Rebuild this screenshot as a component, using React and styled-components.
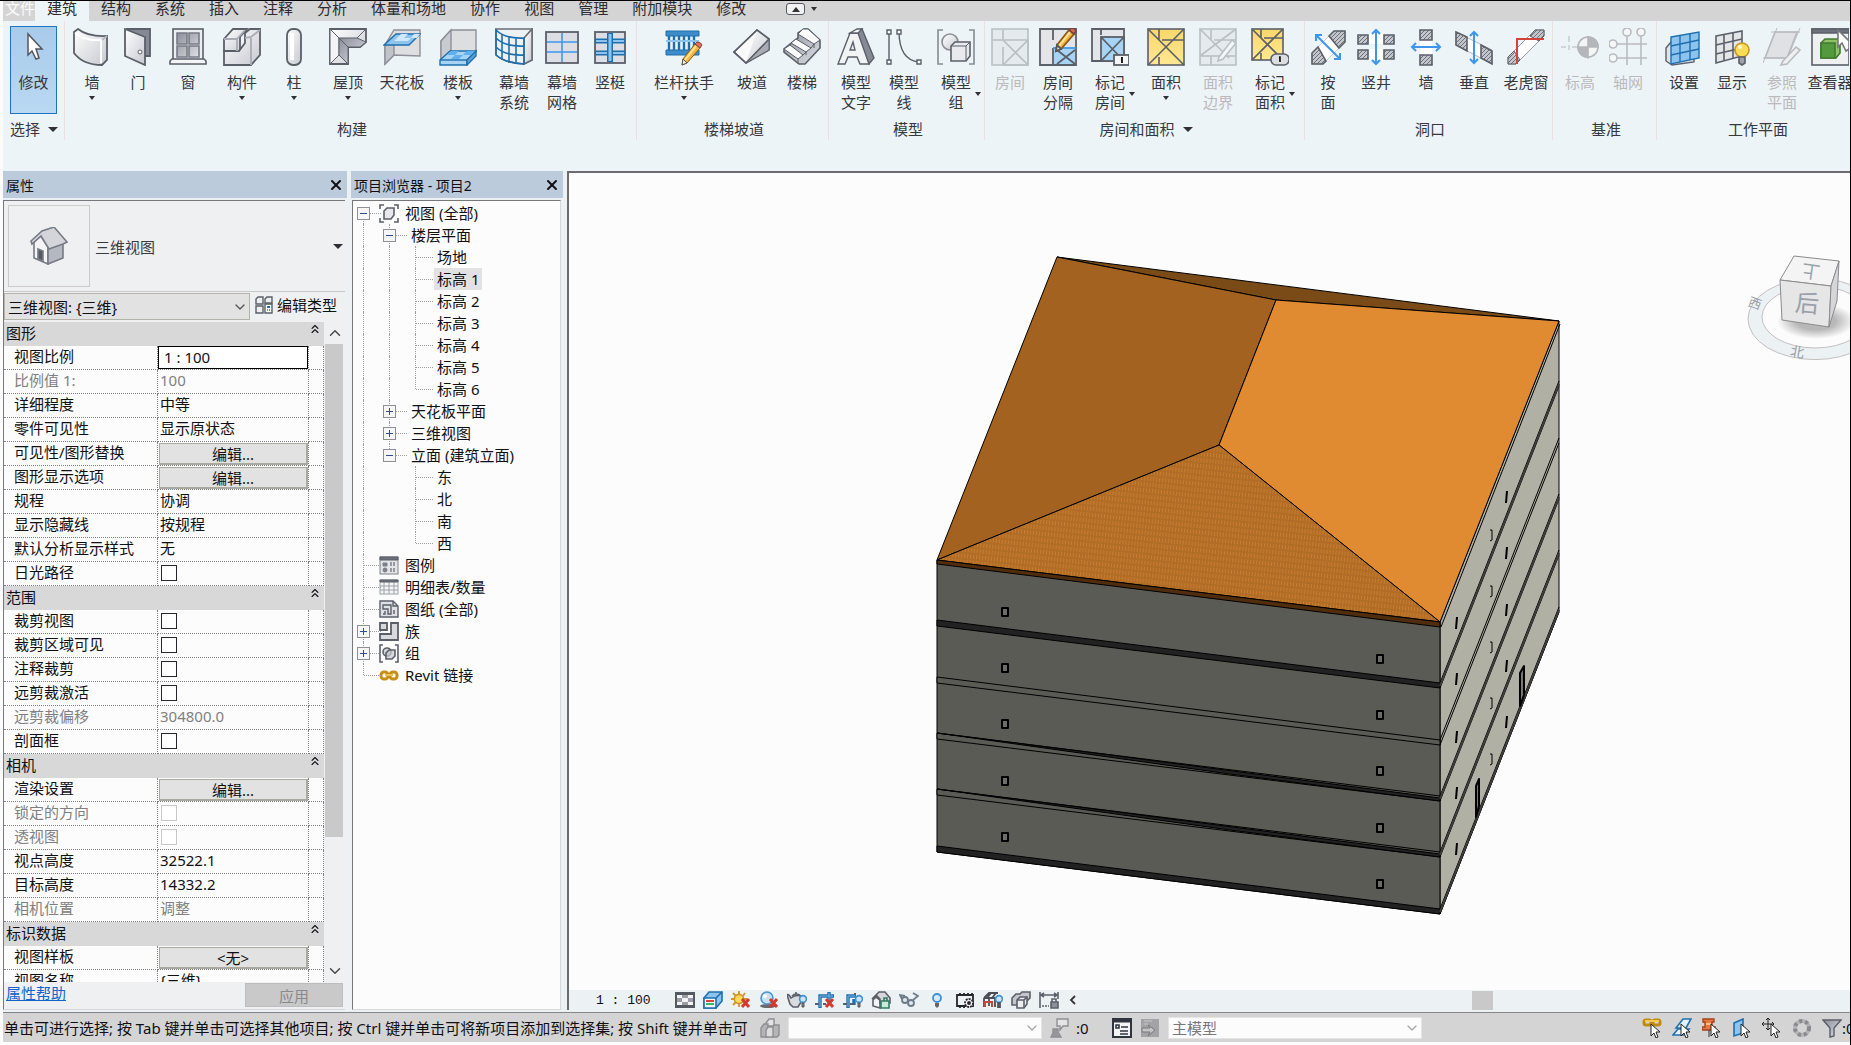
import React, { useState } from "react";
import styled, { createGlobalStyle, css } from "styled-components";
import { ChevronDown, ChevronUp, ChevronsUp, X } from "lucide-react";

const GlobalStyle = createGlobalStyle`
  * {
    box-sizing: border-box;
  }
  body {
    margin: 0;
    overflow: hidden;
    background: #fcfcfc;
  }
  body, button, input, select {
    font-family: "Noto Sans", "Noto Sans CJK SC", sans-serif;
    font-size: 15px;
    color: #101014;
  }
`;

const ink = "#5b5f69";
const blue = "#1f6fae";
const sky = "#8cc4ee";
const arrow = "#3c96f0";

/* shared gradients for the ribbon drawings */
function Gradients() {
  return (
    <Hidden aria-hidden="true">
      <defs>
        <linearGradient id="metal" x1="0" y1="0" x2="1" y2="1">
          <stop offset="0" stopColor="#ffffff" />
          <stop offset="1" stopColor="#c6c9d0" />
        </linearGradient>
        <linearGradient id="steel" x1="0" y1="0" x2="1" y2="1">
          <stop offset="0" stopColor="#8b8f99" />
          <stop offset="1" stopColor="#dfe1e6" />
        </linearGradient>
        <linearGradient id="gold" x1="0" y1="0" x2="0" y2="1">
          <stop offset="0" stopColor="#f9d869" />
          <stop offset="1" stopColor="#ffe892" />
        </linearGradient>
        <pattern id="hatch" width="4" height="4" patternUnits="userSpaceOnUse">
          <rect width="4" height="4" fill="#c3c6cc" />
          <path d="M0 4L4 0" stroke="#6c7079" strokeWidth="1" />
        </pattern>
        <pattern id="tiles" width="3" height="6" patternUnits="userSpaceOnUse" patternTransform="rotate(6)">
          <rect width="3" height="6" fill="#b16c25" />
          <rect width="1" height="4" fill="#c97e30" />
        </pattern>
        <radialGradient id="shade">
          <stop offset="0.5" stopColor="#b8b8b8" />
          <stop offset="1" stopColor="#fcfcfc" />
        </radialGradient>
      </defs>
    </Hidden>
  );
}

const pencil = (
  <g>
    <path d="M18 31L30 16L35 20L22 35L17 37Z" fill="#f4b63c" stroke="#8a5a1c" />
    <path d="M20 32L31 18" stroke="#ffe49a" strokeWidth="2" />
    <path d="M30 16L32 14Q36 14 37 17L35 20Z" fill="#e0705c" stroke="#7f4540" />
    <path d="M18 31L22 35L17 37Z" fill="#f6ead2" stroke="#555" />
  </g>
);

const icons = {
  modify: <path d="M13 6V27L17 23L21 31L24 30L21 21H27Z" fill="#fff" stroke="#55565c" strokeWidth="1.5" />,
  wall: (
    <g stroke={ink} strokeWidth="1.8" fill="url(#metal)">
      <path d="M1 4L5 1Q15 9 34 8V32L29 37Q10 37 1 25Z" />
      <path d="M2 5Q11 13 28 12V35" fill="none" stroke="#fff" />
      <path d="M29 12L34 8" stroke="#b7bac1" />
    </g>
  ),
  door: (
    <g stroke={ink} strokeWidth="1.8">
      <path d="M7 1H31V28H26" fill="#858994" />
      <path d="M6 1L26 9V37L6 28Z" fill="url(#metal)" />
      <circle cx="21" cy="24" r="2" fill="#fff" strokeWidth="1" />
    </g>
  ),
  window: (
    <g stroke={ink} strokeWidth="1.6">
      <rect x="4" y="1" width="30" height="31" fill="#eceef1" />
      <path d="M8 5H18V16H8ZM20 5H30V16H20ZM8 18H18V29H8ZM20 18H30V29H20Z" fill="url(#steel)" stroke="#777b85" />
      <path d="M3 31H35L37 33V36H1V33Z" fill="#f4f4f6" />
    </g>
  ),
  component: (
    <g stroke={ink} strokeWidth="1.8" fill="url(#metal)">
      <path d="M1 11L10 1H24L17 9V23H1Z" />
      <path d="M1 23H16L22 15V5L27 1H37V27L28 37H1Z" />
      <path d="M1 11H14V23M14 11L22 2M22 10L28 9L37 2M28 10V37" fill="none" stroke="#a9acb4" />
    </g>
  ),
  column: (
    <g stroke={ink} strokeWidth="1.8">
      <rect x="12" y="1" width="14" height="36" rx="6" fill="url(#metal)" />
      <path d="M17 5V32" stroke="#fff" strokeWidth="4" />
    </g>
  ),
  roof: (
    <g stroke={ink} strokeWidth="1.8">
      <path d="M1 1H37V14L31 19H19V36H1Z" fill="url(#metal)" />
      <path d="M1 1L10 10V27L1 36Z" fill="#f4f4f6" strokeWidth="1" />
      <path d="M10 10H28L37 14L31 19H19V36L10 27Z" fill="url(#steel)" strokeWidth="1" />
      <path d="M1 1L19 19M37 1L28 10" strokeWidth="1" />
    </g>
  ),
  ceiling: (
    <g strokeWidth="1.4">
      <path d="M11 2H37V28L11 27L2 36V17Z" fill="#dedfe1" stroke="#8d9098" />
      <path d="M2 17L11 12V27L2 36Z" fill="#c0c3c9" stroke="#8d9098" />
      <path d="M13 6H37L26 17H1Z" fill={sky} stroke={blue} />
      <path d="M18 6H25L21 10H14ZM11 13L14 10H21L18 13ZM21 10H28L25 13H18ZM28 10L31 6H37L34 10Z" fill="#cfe8fb" />
    </g>
  ),
  floor: (
    <g strokeWidth="1.4">
      <path d="M2 13L12 2H37V24H12L2 33Z" fill="#dcdee0" stroke="#8d9098" />
      <path d="M2 13L12 2V24L2 33Z" fill="#c8cbd0" stroke="#8d9098" />
      <path d="M1 32L11 23H37L28 32V37H1Z" fill="#a7d4f5" stroke={blue} />
      <path d="M37 23V28L28 37V32Z" fill="#5aa0d6" stroke={blue} />
      <path d="M12 23H20L16 27H8ZM16 27H24L20 31H12ZM28 23H36L32 27H24Z" fill="#5fb0f0" />
      <path d="M1 32H28" stroke={blue} />
    </g>
  ),
  curtainSystem: (
    <g strokeWidth="1.6">
      <path d="M1 1H37V32L29 36Q10 35 1 27Z" fill="#eef1f4" stroke="#686c76" />
      <path d="M29 10L37 1V32L29 36Z" fill="url(#metal)" stroke="#686c76" />
      <path
        d="M1 2Q10 11 29 10V36Q10 35 1 27ZM1 10Q10 19 29 18M1 19Q10 28 29 27M7 6V32M14 9V35M21 10V36"
        fill="none"
        stroke={blue}
      />
    </g>
  ),
  curtainGrid: (
    <g>
      <rect x="3" y="4" width="32" height="31" fill="#dcdee3" stroke={ink} strokeWidth="1.8" />
      <path d="M4 14H34M4 24H34M19 5V34" stroke={arrow} strokeWidth="1.6" />
    </g>
  ),
  mullion: (
    <g>
      <rect x="4" y="4" width="30" height="31" fill="#dcdee3" stroke={ink} strokeWidth="1.8" />
      <path d="M4 13H34M4 25H34" stroke={blue} strokeWidth="5" />
      <path d="M5 13H33M5 25H33" stroke={sky} strokeWidth="2" />
      <path d="M19 5V34" stroke={blue} strokeWidth="6" />
      <path d="M19 6V33" stroke={sky} strokeWidth="3" />
    </g>
  ),
  railing: (
    <g>
      <path d="M1 3H34V8H1ZM1 22H34V27H1Z" fill="#3d8bc8" stroke={blue} />
      <path d="M4 8V22M9 8V22M14 8V22M19 8V22M24 8V22M29 8V22" stroke={blue} strokeWidth="2.4" />
      <path d="M1 13H34" stroke={sky} strokeWidth="2" />
      {pencil}
    </g>
  ),
  ramp: (
    <g stroke={ink} strokeWidth="1.6">
      <path d="M1 24L24 2L36 11V22L13 35Z" fill="#fafafa" />
      <path d="M24 2L36 11V22L13 35Z" fill="url(#metal)" stroke="none" />
      <path d="M13 35L36 11V22Z" fill="#a8abb3" strokeWidth="1" />
      <path d="M1 24L24 2L36 11L13 35Z" fill="none" />
    </g>
  ),
  stairs: (
    <g stroke={ink} strokeWidth="1.6">
      <path d="M1 21L15 10V5L21 1H25L37 12V20L22 36H16L1 24Z" fill="url(#steel)" />
      <path d="M1 21L7 17L20 27L15 31ZM8 15L13 11L28 20L23 24ZM15 6L20 1H25L37 12L31 16Z" fill="#fafafa" strokeWidth="1" />
      <path d="M15 31V36M20 27L23 24V27M28 20L31 16V20" fill="none" strokeWidth="1" />
    </g>
  ),
  modelText: (
    <g stroke={ink} strokeWidth="1.4" fillRule="evenodd">
      <path d="M17 4L25 1L37 30L32 36Z" fill="#868a94" />
      <path d="M13 5H21L32 36H23L20 29H11L8 36H1ZM13 22H18L16 14Z" fill="#f2f3f5" />
      <path d="M13 5L20 1H25L21 5Z" fill="#fff" />
    </g>
  ),
  modelLine: (
    <g stroke={ink} strokeWidth="1.4" fill="none">
      <path d="M4 3V34M14 3Q14 32 34 34" />
      <path d="M2 2H6V6H2ZM2 32H6V36H2ZM12 2H16V6H12ZM32 32H36V36H32Z" fill="#fff" />
    </g>
  ),
  modelGroup: (
    <g stroke={ink} strokeWidth="1.6">
      <path d="M6 2H1V36H6M32 2H37V36H32" fill="none" stroke="#878a92" />
      <circle cx="13" cy="14" r="8" fill="url(#metal)" stroke="#8d9098" />
      <path d="M14 18L18 14H33V28L29 33H14Z" fill="#e9eaed" />
      <path d="M14 18H29V33M29 18L33 14" fill="none" strokeWidth="1" />
    </g>
  ),
  room: (
    <g stroke={ink} strokeWidth="1.6" opacity="0.35">
      <path d="M1 1H37V37H1Z" fill="#d8d8dc" />
      <path d="M1 12H12V1M12 19V37M12 12H37V37H12M12 12L37 37M37 12L12 37" fill="none" />
    </g>
  ),
  roomSeparator: (
    <g stroke={ink} strokeWidth="1.8">
      <path d="M1 1H37V37H1Z" fill="#e3e5e9" />
      <rect x="14" y="21" width="22" height="15" fill="#a7d4f5" stroke="none" />
      <path d="M14 1V12M14 20V37M18 36L36 22M18 22L36 36" fill="none" />
      <path d="M14 20H37" stroke={arrow} />
      <g transform="translate(0 -14)">{pencil}</g>
    </g>
  ),
  tagRoom: (
    <g stroke={ink} strokeWidth="1.8">
      <path d="M1 1H33V33H1Z" fill="#e3e5e9" />
      <rect x="10" y="9" width="23" height="24" fill="#a7d4f5" />
      <path d="M10 1V7M10 9L33 33M33 9L10 33" fill="none" />
      <rect x="23" y="27" width="15" height="10" fill="#f5f5f5" />
      <path d="M30 30L31 30V35" stroke="#111" />
    </g>
  ),
  area: (
    <g stroke={ink} strokeWidth="1.6">
      <rect x="1" y="1" width="36" height="36" fill="url(#gold)" />
      <path d="M1 1L37 37M37 1L1 37M12 1V12M15 12H37M12 29V37" fill="none" />
    </g>
  ),
  areaBoundary: (
    <g stroke={ink} strokeWidth="1.6" opacity="0.35">
      <path d="M1 1H37V37H1Z" fill="#d8d8dc" />
      <path d="M1 1L30 30M37 1L1 28M12 1V12M15 12H37M1 28H37M12 28V37" fill="none" />
      <path d="M20 29L33 12L37 15L24 31L19 33Z" fill="#fff" />
    </g>
  ),
  tagArea: (
    <g stroke={ink} strokeWidth="1.6">
      <rect x="1" y="1" width="31" height="31" fill="url(#gold)" />
      <path d="M1 1L32 32M32 1L1 32M10 1V10M13 10H32M10 25V32" fill="none" />
      <rect x="20" y="26" width="18" height="11" rx="5" fill="#dcdde0" />
      <path d="M28 29L29 29V34" stroke="#111" />
    </g>
  ),
  byFace: (
    <g>
      <path d="M3 36V25L25 3H36V14L14 36Z" fill="#fff" stroke="#c9ccd1" />
      <path d="M3 36V25L9 19L17 33L14 36ZM36 3V14L30 20L20 8L25 3Z" fill="url(#hatch)" stroke={ink} strokeWidth="1.6" />
      <path d="M8 8L30 30M7 13V7H13M25 31H31V25" stroke={arrow} strokeWidth="2" fill="none" />
    </g>
  ),
  shaft: (
    <g>
      <path d="M12 5H26V16H12ZM12 21H26V32H12Z" fill="#fff" />
      <path d="M1 7H11V16H1ZM27 7H37V16H27ZM1 22H11V31H1ZM27 22H37V31H27Z" fill="url(#hatch)" stroke={ink} strokeWidth="1.6" />
      <path d="M19 2V36M15 6L19 2L23 6M15 32L19 36L23 32" stroke={arrow} strokeWidth="2" fill="none" />
    </g>
  ),
  wallOpening: (
    <g>
      <path d="M13 12H25V27H13Z" fill="#fff" />
      <path d="M13 2H25V12H13ZM13 27H25V37H13Z" fill="url(#hatch)" stroke={ink} strokeWidth="1.6" />
      <path d="M5 19H33M9 15L5 19L9 23M29 15L33 19L29 23" stroke={arrow} strokeWidth="2" fill="none" />
    </g>
  ),
  vertical: (
    <g>
      <path d="M1 4L37 22V36L1 17Z" fill="#fff" stroke="#b7bac1" />
      <path d="M1 4L12 9V23L1 17ZM26 17L37 23V36L26 30Z" fill="url(#hatch)" stroke={ink} strokeWidth="1.6" />
      <path d="M19 4V35M15 8L19 4L23 8M15 31L19 35L23 31" stroke={arrow} strokeWidth="2" fill="none" />
    </g>
  ),
  dormer: (
    <g>
      <path d="M1 36V29L28 2H37V8L9 36Z" fill="#fff" stroke="#9a9da5" />
      <path d="M28 2H37V8L32 13L23 8ZM1 36V29L7 23L13 32L9 36Z" fill="url(#hatch)" stroke={ink} />
      <path d="M10 36V11H37" stroke="#d2413a" strokeWidth="2" fill="none" />
    </g>
  ),
  level: (
    <g stroke="#b4b6bb" strokeWidth="1.6">
      <path d="M0 19H5M8 17V22M8 8V14M11 19H38M27 8V31" fill="none" strokeWidth="1" />
      <circle cx="27" cy="19" r="10" fill="#f4f5f6" />
      <path d="M27 9A10 10 0 0 1 37 19H27ZM27 29A10 10 0 0 1 17 19H27Z" fill="#b4b6bb" />
    </g>
  ),
  grid: (
    <g stroke="#b9bbc0" strokeWidth="1.6" fill="#f4f6f7">
      <path d="M18 8V37M32 8V37M8 16H38M8 30H38" />
      <circle cx="18" cy="4" r="4" />
      <circle cx="32" cy="4" r="4" />
      <circle cx="4" cy="16" r="4" />
      <circle cx="4" cy="30" r="4" />
    </g>
  ),
  set: (
    <g strokeWidth="1.4">
      <path d="M1 20L6 14L29 12V34L7 37L1 33Z" fill="#dfe5ea" stroke={ink} />
      <path d="M6 9L34 4V30L6 36Z" fill={sky} stroke={blue} />
      <path d="M6 18L34 12M6 27L34 21M15 7V34M25 5V32" stroke={blue} />
    </g>
  ),
  show: (
    <g strokeWidth="1.6">
      <path d="M3 8L29 3V28L3 35Z" fill="#e3e5e9" stroke={ink} />
      <path d="M3 17L29 11M3 26L29 20M11 7V33M20 5V31" stroke={ink} />
      <circle cx="29" cy="22" r="7" fill="#fbdc58" stroke="#c79822" />
      <circle cx="27" cy="19" r="2" fill="#fff8d4" />
      <path d="M26 29H32V35L29 37L26 35Z" fill="#9ea2aa" stroke={ink} />
    </g>
  ),
  refPlane: (
    <g stroke="#b9bbc0" strokeWidth="1.6">
      <path d="M12 4H34L24 30H2Z" fill="#e0e1e4" />
      <path d="M8 4H37M14 0L0 35M37 0L22 36M0 30H28" fill="none" strokeWidth="1" />
      <path d="M20 33L33 19L37 22L24 36L18 37Z" fill="#f0f0f1" />
    </g>
  ),
  viewer: (
    <g stroke={ink} strokeWidth="1.6">
      <rect x="1" y="1" width="37" height="36" fill="#eef0f2" />
      <path d="M1 1H38V5H1Z" fill="#6d717b" />
      <path d="M10 15L14 11H29V25L25 30H10Z" fill="#8fc06a" stroke="#3f7a2e" />
      <path d="M10 15H24V30H10Z" fill="#55993f" stroke="#3f7a2e" />
      <path d="M27 2V19L31 15L35 23L38 21V13Z" fill="#fff" stroke="#777" />
    </g>
  ),
};

const ribbonPanels = [
  {
    title: "构建",
    tools: [
      { icon: "wall", label: "墙", w: 44, drop: true },
      { icon: "door", label: "门", w: 48 },
      { icon: "window", label: "窗", w: 52 },
      { icon: "component", label: "构件", w: 56, drop: true },
      { icon: "column", label: "柱", w: 48, drop: true },
      { icon: "roof", label: "屋顶", w: 60, drop: true },
      { icon: "ceiling", label: "天花板", w: 48 },
      { icon: "floor", label: "楼板", w: 64, drop: true },
      { icon: "curtainSystem", label: "幕墙\n系统", w: 48 },
      { icon: "curtainGrid", label: "幕墙\n网格", w: 48 },
      { icon: "mullion", label: "竖梃", w: 48 },
    ],
  },
  {
    title: "楼梯坡道",
    tools: [
      { icon: "railing", label: "栏杆扶手", w: 84, drop: true },
      { icon: "ramp", label: "坡道", w: 52 },
      { icon: "stairs", label: "楼梯", w: 48 },
    ],
  },
  {
    title: "模型",
    tools: [
      { icon: "modelText", label: "模型\n文字", w: 44 },
      { icon: "modelLine", label: "模型\n线", w: 52 },
      { icon: "modelGroup", label: "模型\n组", w: 52, side: true },
    ],
  },
  {
    title: "房间和面积",
    more: true,
    tools: [
      { icon: "room", label: "房间", w: 40, off: true },
      { icon: "roomSeparator", label: "房间\n分隔", w: 56 },
      { icon: "tagRoom", label: "标记\n房间", w: 48, side: true },
      { icon: "area", label: "面积", w: 64, drop: true },
      { icon: "areaBoundary", label: "面积\n边界", w: 40, off: true },
      { icon: "tagArea", label: "标记\n面积", w: 64, side: true },
    ],
  },
  {
    title: "洞口",
    tools: [
      { icon: "byFace", label: "按\n面", w: 36 },
      { icon: "shaft", label: "竖井", w: 60 },
      { icon: "wallOpening", label: "墙", w: 40 },
      { icon: "vertical", label: "垂直", w: 56 },
      { icon: "dormer", label: "老虎窗", w: 48 },
    ],
  },
  {
    title: "基准",
    tools: [
      { icon: "level", label: "标高", w: 44, off: true },
      { icon: "grid", label: "轴网", w: 52, off: true },
    ],
  },
  {
    title: "工作平面",
    tools: [
      { icon: "set", label: "设置", w: 44 },
      { icon: "show", label: "显示", w: 52 },
      { icon: "refPlane", label: "参照\n平面", w: 48, off: true },
      { icon: "viewer", label: "查看器", w: 48 },
    ],
  },
];

const tabs = ["建筑", "结构", "系统", "插入", "注释", "分析", "体量和场地", "协作", "视图", "管理", "附加模块", "修改"];

const properties = [
  {
    group: "图形",
    rows: [
      ["视图比例", "input", "1 : 100"],
      ["比例值 1:", "text", "100", true],
      ["详细程度", "text", "中等"],
      ["零件可见性", "text", "显示原状态"],
      ["可见性/图形替换", "button", "编辑..."],
      ["图形显示选项", "button", "编辑..."],
      ["规程", "text", "协调"],
      ["显示隐藏线", "text", "按规程"],
      ["默认分析显示样式", "text", "无"],
      ["日光路径", "check"],
    ],
  },
  {
    group: "范围",
    rows: [
      ["裁剪视图", "check"],
      ["裁剪区域可见", "check"],
      ["注释裁剪", "check"],
      ["远剪裁激活", "check"],
      ["远剪裁偏移", "text", "304800.0", true],
      ["剖面框", "check"],
    ],
  },
  {
    group: "相机",
    rows: [
      ["渲染设置", "button", "编辑..."],
      ["锁定的方向", "check", "", true],
      ["透视图", "check", "", true],
      ["视点高度", "text", "32522.1"],
      ["目标高度", "text", "14332.2"],
      ["相机位置", "text", "调整", true],
    ],
  },
  {
    group: "标识数据",
    rows: [
      ["视图样板", "button", "<无>"],
      ["视图名称", "text", "{三维}"],
    ],
  },
];

const treeIcons = {
  views: (
    <g fill="none" stroke={ink} strokeWidth="1.6">
      <path d="M1 5V1H5M15 1H19V5M19 14V18H15M5 18H1V14" />
      <path d="M5 7L8 4H15V11L12 15H5Z" fill="#e7e8eb" />
    </g>
  ),
  legend: (
    <g stroke="#7d808a">
      <rect x="1" y="1" width="18" height="17" fill="#e3e5e9" />
      <path d="M1 1H19V4H1Z" fill="#6d717b" stroke={ink} />
      <path d="M4 7H8V10H4Z" fill="#7d808a" />
      <circle cx="6" cy="14" r="2" fill="#7d808a" />
      <path d="M11 7H17M11 9H17M11 13H17M11 15H17" strokeWidth="1.4" strokeDasharray="2 1" />
    </g>
  ),
  schedule: (
    <g stroke="#9da0a8">
      <rect x="1" y="2" width="18" height="14" fill="#f4f5f6" />
      <path d="M1 8H19M1 12H19M5 4V16M10 4V16M15 4V16" />
      <path d="M1 2H19V4H1Z" fill="#6d717b" stroke={ink} />
    </g>
  ),
  sheet: (
    <g stroke={ink} strokeWidth="1.4" fill="none">
      <path d="M1 1H14L19 6V17H1Z" fill="#dfe1e5" />
      <path d="M4 5H12V14H9V9H4ZM4 14H6V11M14 1V6H19M15 10V14" />
    </g>
  ),
  family: (
    <g stroke={ink} strokeWidth="1.8" fill="#d8dadf">
      <path d="M1 1H8V8H1ZM12 1H19V18H1V12H12Z" />
    </g>
  ),
  group: (
    <g stroke={ink} strokeWidth="1.6" fill="none">
      <path d="M4 1H1V18H4M16 1H19V18H16" />
      <circle cx="8" cy="8" r="4" fill="#d5d7dc" />
      <path d="M7 9L10 6H16V12L13 15H7Z" fill="#c7c9cf" fillOpacity="0.7" />
    </g>
  ),
  link: (
    <g fill="none" stroke="#c78e16" strokeWidth="3">
      <rect x="2" y="6" width="7" height="7" rx="3" />
      <rect x="11" y="6" width="7" height="7" rx="3" />
      <path d="M6 9H14" stroke="#f0c04a" strokeWidth="2" />
    </g>
  ),
};

/* guides: l = vertical line, t = branch, e = last branch, n = nothing,
   f/b/z = toggle that opens, sits inside, or closes its branch */
const tree = [
  { guides: "f", icon: "views", name: "视图 (全部)", open: true },
  { guides: "lb", name: "楼层平面", open: true },
  { guides: "llt", name: "场地" },
  { guides: "llt", name: "标高 1" },
  { guides: "llt", name: "标高 2" },
  { guides: "llt", name: "标高 3" },
  { guides: "llt", name: "标高 4" },
  { guides: "llt", name: "标高 5" },
  { guides: "lle", name: "标高 6" },
  { guides: "lb", name: "天花板平面" },
  { guides: "lb", name: "三维视图" },
  { guides: "lz", name: "立面 (建筑立面)", open: true },
  { guides: "lnt", name: "东" },
  { guides: "lnt", name: "北" },
  { guides: "lnt", name: "南" },
  { guides: "lne", name: "西" },
  { guides: "t", icon: "legend", name: "图例" },
  { guides: "t", icon: "schedule", name: "明细表/数量" },
  { guides: "t", icon: "sheet", name: "图纸 (全部)" },
  { guides: "b", icon: "family", name: "族" },
  { guides: "b", icon: "group", name: "组" },
  { guides: "e", icon: "link", name: "Revit 链接" },
];

const redX = <path d="M11 8L18 16M18 8L11 16" stroke="#d23a2e" strokeWidth="3" />;
const bulb = (
  <g>
    <circle cx="16" cy="8" r="3.4" fill="#c9e4fb" stroke="#3f8fd4" strokeWidth="1.6" />
    <path d="M15 12H17V16H15Z" fill="#888" stroke="#555" />
  </g>
);

const viewTools = [
  [
    "详细程度",
    <g key="a">
      <path d="M0 1H20V17H0Z" fill="#555962" />
      <path d="M2 4H7V7H2ZM13 4H18V7H13ZM7 7H13V11H7ZM2 11H7V14H2ZM13 11H18V14H13Z" fill="#f4f4f6" />
      <path d="M7 4H13V7H7ZM2 7H7V11H2ZM13 7H18V11H13ZM7 11H13V14H7Z" fill="#9a9da6" />
    </g>,
  ],
  [
    "视觉样式",
    <g key="b" stroke={blue} strokeWidth="1.6">
      <path d="M1 7L6 1H19V10L13 17H1Z" fill={sky} />
      <path d="M1 7H13V17H1Z" fill="#f3f8fb" />
      <path d="M3 10H11" stroke="#e0403a" strokeWidth="2" />
      <path d="M3 13H11" stroke="#3cb464" strokeWidth="2" />
      <path d="M13 7L19 1" />
    </g>,
  ],
  [
    "日光路径",
    <g key="c">
      <path d="M8 0V3M8 12V16M0 8H3M12 8H16M2 2L5 5M14 2L12 5M2 14L5 11" stroke="#d0942a" strokeWidth="1.8" />
      <circle cx="8" cy="8" r="4.6" fill="#ffd95c" stroke="#d0942a" strokeWidth="1.6" />
      {redX}
    </g>,
  ],
  [
    "阴影",
    <g key="d">
      <ellipse cx="9" cy="15" rx="8" ry="2" fill="#66696f" />
      <circle cx="8" cy="7" r="6" fill="#c4e1f7" stroke="#4f94c9" strokeWidth="1.6" />
      <circle cx="6" cy="5" r="2" fill="#fff" />
      {redX}
    </g>,
  ],
  [
    "渲染",
    <g key="e">
      <path d="M4 7Q1 2 0 4L3 13L6 16H11L14 11V5Q9 3 4 7Z" fill="#d9dbdf" stroke={ink} strokeWidth="1.6" />
      <path d="M5 5Q9 1 14 5M9 3V1" stroke={ink} strokeWidth="1.6" fill="none" />
      {bulb}
    </g>,
  ],
  [
    "裁剪",
    <g key="f" fill="none">
      <path d="M5 17V5H19M14 12V1" stroke={blue} strokeWidth="3.4" />
      <path d="M5 16V5H18M14 12V2" stroke="#7ab4e2" strokeWidth="1" />
      <path d="M0 13H4M8 13H11" stroke={ink} strokeWidth="2" />
      {redX}
    </g>,
  ],
  [
    "显示裁剪",
    <g key="g" fill="none">
      <path d="M5 17V5H13M11 14V8" stroke={blue} strokeWidth="3.4" />
      <path d="M5 16V5H12" stroke="#7ab4e2" strokeWidth="1" />
      <path d="M0 13H4M7 13H11M12 2V4" stroke={ink} strokeWidth="2" />
      {bulb}
    </g>,
  ],
  [
    "锁定视图",
    <g key="h" stroke={ink} strokeWidth="1.6">
      <path d="M2 9V15L9 17V9L5 6Z" fill="#f4f4f6" />
      <path d="M1 8L8 1L14 1L19 7V12H9V8L6 5Z" fill="#d5d7dc" />
      <path d="M10 10H18V17H10Z" fill="#c4ecd9" stroke="#347a65" />
      <path d="M13 10V7H16V10" fill="none" stroke="#347a65" />
    </g>,
  ],
  [
    "临时隐藏",
    <g key="i" stroke="#6c7a8a" strokeWidth="1.8" fill="#dfe7ee">
      <path d="M3 8L1 4L6 5M14 9L19 5L14 2" fill="none" />
      <ellipse cx="6" cy="9" rx="3" ry="3" />
      <ellipse cx="12" cy="12" rx="3" ry="3" />
    </g>,
  ],
  [
    "显示隐藏",
    <g key="j">
      <circle cx="10" cy="7" r="4" fill="#d5ebfb" stroke="#3f8fd4" strokeWidth="1.8" />
      <path d="M8 12H12V15L10 17L8 15Z" fill="#666" />
    </g>,
  ],
  [
    "临时属性",
    <g key="k" stroke="#24262b" strokeWidth="1.8" fill="none">
      <path d="M2 4H18V15H2Z" />
      <path d="M5 2V4M9 2V4M13 2V4M17 2V4M5 15V17M9 15V17" />
      <circle cx="14" cy="12" r="4" fill="#f4f4f6" strokeDasharray="2 1" />
      <circle cx="14" cy="12" r="1" />
    </g>,
  ],
  [
    "分析模型",
    <g key="l" stroke="#4a4d55" strokeWidth="1.8" fill="none">
      <path d="M1 7L6 2H15M1 7H12V16M1 7V16M6 7V15M8 2L4 7M13 2L9 7" />
      <path d="M2 16V11H9V16" stroke="#c8473c" strokeWidth="2" />
      {bulb}
    </g>,
  ],
  [
    "高亮位移",
    <g key="m" stroke={ink} strokeWidth="1.6" fill="#c3c6cc">
      <path d="M1 7L5 3H9L11 1H19V7L16 10H7V14H1Z" />
      <path d="M6 9L9 6H16V13L13 17H6Z" fill="#eceef0" />
      <path d="M6 9H13V17M13 9L16 6" fill="none" />
    </g>,
  ],
  [
    "显示约束",
    <g key="n" stroke={ink} strokeWidth="1.6" fill="none">
      <path d="M1 1V17M19 1V8M2 4H18M5 2L2 4L5 6M15 2L18 4L15 6" />
      <path d="M3 15H10" strokeDasharray="2 1" />
      <path d="M12 11H19V17H12Z" fill="#8d9098" />
      <path d="M13 11V8H17V11" />
    </g>,
  ],
];

const cursor = <path d="M9 6V18L12 15L14 20L16 19L14 14H18Z" fill="#fff" stroke="#222" />;

const selectTools = [
  [
    "选择链接",
    <g key="a">
      <g fill="none" stroke="#c08a14" strokeWidth="3">
        <rect x="2" y="2" width="7" height="5" rx="2" />
        <rect x="11" y="2" width="7" height="5" rx="2" />
      </g>
      <path d="M3 3H17" stroke="#ffd95c" strokeWidth="1.6" />
      {cursor}
    </g>,
  ],
  [
    "选择基线图元",
    <g key="b" fill="#e6f3fd" stroke={blue} strokeWidth="1.6">
      <path d="M1 17L6 11H17L12 17Z" />
      <path d="M4 10L11 1H19L14 10Z" />
      <g strokeWidth="1">{cursor}</g>
    </g>,
  ],
  [
    "选择锁定图元",
    <g key="c">
      <path d="M1 1H12V4H10V9H13V12H0V9H3V4H1Z" fill="#e9783a" stroke="#a5421c" strokeWidth="1.4" />
      <path d="M4 6H9" stroke="#f7c08c" strokeWidth="2" />
      <path d="M7 12V19" stroke="#333" />
      {cursor}
    </g>,
  ],
  [
    "按面选择图元",
    <g key="d">
      <path d="M2 5L11 1V15L2 18Z" fill={sky} stroke={blue} strokeWidth="1.6" />
      {cursor}
    </g>,
  ],
  [
    "选择时拖曳图元",
    <g key="e">
      <path d="M0 6H12M6 0V12M4 2L6 0L8 2M4 10L6 12L8 10M2 4L0 6L2 8M10 4L12 6L10 8" stroke="#222" fill="none" />
      {cursor}
    </g>,
  ],
  [
    "后台进程",
    <g key="f" fill="none">
      <circle cx="10" cy="10" r="7" stroke="#b4b4b6" strokeWidth="4" />
      <circle cx="10" cy="10" r="7" stroke="#8a8a8d" strokeWidth="4" strokeDasharray="3 3" />
    </g>,
  ],
  ["过滤器", <path key="g" d="M1 2H19L12 10V18L8 19V10Z" fill="url(#steel)" stroke={ink} strokeWidth="1.4" />],
];

function Ribbon() {
  return (
    <RibbonBar>
      <RibbonPanel $first>
        <ToolRow>
          <Tool $w={47} $active>
            <ToolIcon viewBox="0 0 38 38">{icons.modify}</ToolIcon>
            <ToolLabel>修改</ToolLabel>
          </Tool>
        </ToolRow>
        <PanelTitle>
          选择 <Caret $big />
        </PanelTitle>
      </RibbonPanel>
      {ribbonPanels.map((panel) => (
        <RibbonPanel key={panel.title}>
          <ToolRow>
            {panel.tools.map((tool) => (
              <Tool key={tool.icon} $w={tool.w} disabled={tool.off}>
                <ToolIcon viewBox="0 0 38 38">{icons[tool.icon]}</ToolIcon>
                <ToolLabel>
                  {tool.label}
                  {tool.side && <SideCaret />}
                </ToolLabel>
                {tool.drop && <Caret />}
              </Tool>
            ))}
          </ToolRow>
          <PanelTitle>
            {panel.title} {panel.more && <Caret $big />}
          </PanelTitle>
        </RibbonPanel>
      ))}
    </RibbonBar>
  );
}

function PropertyValue({ id, kind, value, off }) {
  if (kind === "input") return <ScaleInput id={id} defaultValue={value} />;
  if (kind === "button") return <EditButton id={id}>{value}</EditButton>;
  if (kind === "check") return <Check id={id} type="checkbox" disabled={off} />;
  return <output id={id}>{value}</output>;
}

function Properties() {
  return (
    <Palette $w={344}>
      <PaletteTitle>
        属性
        <CloseButton aria-label="关闭属性">
          <X size={16} strokeWidth={3} />
        </CloseButton>
      </PaletteTitle>
      <PropertiesBody>
        <TypeSelector>
          <Thumb>
            <svg width="38" height="38" viewBox="0 0 38 38">
              <g stroke="#777b85" strokeWidth="1.6">
                <path d="M4 14L11 9L18 20V37L4 31Z" fill="#f4f4f6" />
                <path d="M18 19L33 14V31L18 37Z" fill="#b4b8c1" />
                <path d="M1 14L12 4L24 0L37 15L33 17L19 22L11 9L2 17Z" fill="#d3d5da" />
                <path d="M8 22L13 24V34L8 32Z" fill="#555962" />
              </g>
            </svg>
          </Thumb>
          三维视图
          <Caret $big />
        </TypeSelector>
        <InstanceRow>
          <SelectBox $grow $face="#e2e2e2">
            <select aria-label="实例">
              <option>三维视图: {"{三维}"}</option>
            </select>
            <ChevronDown size={16} />
          </SelectBox>
          <EditType>
            <svg width="18" height="18" viewBox="0 0 18 18" fill="#eceef0" stroke={ink} strokeWidth="1.4">
              <path d="M1 3L3 1H8V8H1ZM10 3L12 1H17V7H10ZM1 10H8V17H1Z" />
              <path d="M10 8H17V17H10Z" fill="#fff" />
              <path d="M12 11H15" stroke={blue} strokeWidth="2" />
              <path d="M12 14H13M14 14H15" />
            </svg>
            编辑类型
          </EditType>
        </InstanceRow>
        <TableArea>
          <TableClip>
            <PropertyTable>
              <colgroup>
                <col width="154" />
                <col />
                <col width="15" />
              </colgroup>
              {properties.map((section) => (
                <tbody key={section.group}>
                  <tr>
                    <GroupCell colSpan="3">
                      <GroupHead>
                        {section.group}
                        <ChevronsUp size={14} />
                      </GroupHead>
                    </GroupCell>
                  </tr>
                  {section.rows.map(([label, kind, value, off]) => (
                    <PropertyRow key={label} $off={off}>
                      <td>
                        <label htmlFor={"p-" + label}>{label}</label>
                      </td>
                      <td>
                        <PropertyValue id={"p-" + label} kind={kind} value={value} off={off} />
                      </td>
                      <td />
                    </PropertyRow>
                  ))}
                </tbody>
              ))}
            </PropertyTable>
          </TableClip>
          <ScrollColumn>
            <ChevronUp size={18} />
            <ScrollTrack>
              <ScrollThumb />
            </ScrollTrack>
            <ChevronDown size={18} />
          </ScrollColumn>
        </TableArea>
        <PaletteFooter>
          <a href="#help">属性帮助</a>
          <ApplyButton disabled>应用</ApplyButton>
        </PaletteFooter>
      </PropertiesBody>
    </Palette>
  );
}

function Browser() {
  const [selected, setSelected] = useState("标高 1");
  return (
    <Palette $w={212}>
      <PaletteTitle>
        项目浏览器 - 项目2
        <CloseButton aria-label="关闭项目浏览器">
          <X size={16} strokeWidth={3} />
        </CloseButton>
      </PaletteTitle>
      <BrowserBody>
        {tree.map((node) => (
          <TreeRow key={node.name} onClick={() => setSelected(node.name)}>
            {node.guides.split("").map((kind, i) => (
              <Guide key={i} $kind={kind}>
                {"fbz".includes(kind) && (
                  <Toggle aria-label={node.name}>
                    <svg width="11" height="11" viewBox="0 0 11 11" stroke="#2d4f9e">
                      <path d={node.open ? "M2 5.5H9" : "M2 5.5H9M5.5 2V9"} />
                    </svg>
                  </Toggle>
                )}
              </Guide>
            ))}
            {node.icon && (
              <svg width="20" height="19" viewBox="0 0 20 19">
                {treeIcons[node.icon]}
              </svg>
            )}
            <NodeName $selected={selected === node.name}>{node.name}</NodeName>
          </TreeRow>
        ))}
      </BrowserBody>
    </Palette>
  );
}

/* floor bands on the front wall: y at the left corner, y at the right corner */
const bands = [
  [620, 683, "solid"],
  [677, 740, "open"],
  [733, 796, "wedge"],
  [789, 852, "wedge"],
  [846, 909, "solid"],
];

function Building() {
  return (
    <Scene viewBox="570 173 1279 817" role="img" aria-label="三维模型">
      <g stroke="#000" strokeWidth="1" strokeLinejoin="round">
        <path d="M1440 622L1559 321V612L1440 914Z" fill="#b1b0a5" />
        <path d="M937 560L1440 622V914L937 852Z" fill="#5b5b55" />
        {bands.map(([left, right, kind]) => (
          <g key={left}>
            <path
              d={`M937 ${left}L1440 ${right}V${right + 5}L937 ${left + 6}Z`}
              fill={kind === "solid" ? "#222222" : "#5b5b55"}
            />
            {kind === "wedge" && (
              <path d={`M937 ${left}L1110 ${left + 22}L1440 ${right + 2}V${right + 5}L1230 ${left + 41}Z`} fill="#222222" />
            )}
            <path d={`M1440 ${right}L1559 ${right - 302}M1440 ${right + 5}L1559 ${right - 297}`} />
            {kind !== "open" && <path d={`M1440 ${right + 3}L1559 ${right - 299}`} stroke="#3c3c3a" strokeWidth="2" />}
          </g>
        ))}
        {[612, 668, 724, 781, 837].map((y) => (
          <g key={y} fill="#6d6d67" strokeWidth="2">
            <path d={`M1002 ${y - 4}H1008V${y + 4}H1002Z`} />
            <path d={`M1377 ${y + 43}H1383V${y + 51}H1377Z`} />
          </g>
        ))}
        <g strokeWidth="2">
          {[623, 679, 737, 793, 849].map((y) => (
            <path key={y} d={`M1457 ${y - 6}L1456 ${y + 6}`} />
          ))}
          {[535, 591, 647, 703, 759].map((y) => (
            <path key={y} d={`M1490 ${y - 5}H1492V${y + 5}L1490 ${y + 6}`} fill="none" strokeWidth="1" />
          ))}
          {[497, 553, 610, 666, 722].map((y) => (
            <path key={y} d={`M1507 ${y - 6}L1506 ${y + 6}`} />
          ))}
          <path d="M1520 706V673L1524 666V695Z" fill="#777" />
          <path d="M1476 817V786L1479 779V806Z" fill="#777" />
        </g>
        <path d="M1057 257L1559 321L1276 300Z" fill="#7a4a17" />
        <path d="M1057 257L1276 300L1219 445L937 560Z" fill="#a3621f" />
        <path d="M1276 300L1559 321L1440 622L1219 445Z" fill="#e08b32" />
        <path d="M937 560L1219 445L1440 622Z" fill="url(#tiles)" />
        <path d="M937 560L1440 622V627L937 564Z" fill="#4f2d0d" />
        <path d="M1441 627L1560 324" stroke="#000" strokeWidth="1" />
      </g>
    </Scene>
  );
}

function ViewCube() {
  return (
    <Cube viewBox="0 0 108 115" aria-label="视图方块">
      <path
        d="M20 64A66 40 0 1 1 154 64A66 40 0 1 1 20 64ZM34 62A53 31 0 1 0 140 62A53 31 0 1 0 34 62Z"
        transform="translate(-14 0)"
        fill="#ecf2f4"
        stroke="#c5bebe"
        fillRule="evenodd"
      />
      <ellipse cx="74" cy="66" rx="39" ry="18" fill="url(#shade)" />
      <g stroke="#8b8b8d" strokeWidth="1">
        <path d="M52 1L97 6L89 31L38 25Z" fill="#f4f4f4" />
        <path d="M38 25L89 31L87 72L40 65Z" fill="#e6e6e7" />
        <path d="M89 31L97 6L95 46L87 72Z" fill="#d6d6d8" />
      </g>
      <g fill="#9aa0a8" fontFamily="Noto Sans CJK SC, sans-serif" textAnchor="middle">
        <text x="65" y="57" fontSize="24" transform="rotate(5 65 50)">
          后
        </text>
        <text x="69" y="22" fontSize="18" transform="rotate(188 69 16)">
          上
        </text>
        <text x="13" y="53" fontSize="13" transform="rotate(20 13 48)">
          西
        </text>
        <text x="55" y="102" fontSize="14" transform="rotate(10 55 98)">
          北
        </text>
      </g>
    </Cube>
  );
}

export default function App() {
  const [tab, setTab] = useState("建筑");
  return (
    <Window>
      <GlobalStyle />
      <Gradients />
      <TabBar>
        <FileTab>文件</FileTab>
        {tabs.map((name) => (
          <Tab key={name} $on={tab === name} onClick={() => setTab(name)}>
            {name}
          </Tab>
        ))}
        <Collapse aria-label="最小化功能区">
          <CollapseFace>
            <svg width="8" height="5" viewBox="0 0 8 5">
              <path d="M0 5L4 0L8 5Z" fill="#333" />
            </svg>
          </CollapseFace>
          <Caret />
        </Collapse>
      </TabBar>
      <Ribbon />
      <Workspace>
        <Properties />
        <Browser />
        <Viewport>
          <Canvas>
            <Building />
            <ViewCube />
          </Canvas>
          <ViewBar>
            <ScaleLabel>1 : 100</ScaleLabel>
            {viewTools.map(([name, drawing]) => (
              <SmallButton key={name} aria-label={name}>
                <svg width="20" height="18" viewBox="0 0 20 18">
                  {drawing}
                </svg>
              </SmallButton>
            ))}
            <SmallButton aria-label="收起">
              <svg width="20" height="18" viewBox="0 0 20 18">
                <path d="M8 5L4 9L8 13" fill="none" stroke="#333" strokeWidth="1.8" />
              </svg>
            </SmallButton>
            <BottomTrack>
              <BottomThumb />
            </BottomTrack>
          </ViewBar>
        </Viewport>
      </Workspace>
      <StatusBar>
        <Hint>单击可进行选择; 按 Tab 键并单击可选择其他项目; 按 Ctrl 键并单击可将新项目添加到选择集; 按 Shift 键并单击可</Hint>
        <SmallButton aria-label="工作集">
          <svg width="20" height="20" viewBox="0 0 20 20" fill="#b4b4b7" stroke="#8f8f92" strokeWidth="1.4">
            <path d="M6 5L9 1H14V8H6Z" fill="#e4e4e6" />
            <path d="M1 10L4 6H8V19H1ZM12 10L14 7H19V17L17 19H12Z" />
            <path d="M6 12L8 9H13V19H6Z" fill="#dcdcde" />
          </svg>
        </SmallButton>
        <SelectBox $w={254} $face="#fcfcfc" $quiet>
          <select aria-label="活动工作集" />
          <ChevronDown size={16} />
        </SelectBox>
        <Requests>
          <svg width="20" height="20" viewBox="0 0 20 20" stroke="#8f8f92" strokeWidth="1.4">
            <path d="M7 1H18V8H13L10 12V8H7Z" fill="#e4e4e6" />
            <path d="M3 11H8V14L11 19H1L3 15Z" fill="#97979a" />
          </svg>
          :0
        </Requests>
        <SmallButton aria-label="设计选项">
          <svg width="20" height="20" viewBox="0 0 20 20">
            <path d="M1 1H19V19H1Z" fill="#f4f4f6" stroke="#30343f" strokeWidth="2" />
            <path d="M1 3H19" stroke="#30343f" strokeWidth="3" />
            <path d="M4 7H7V10H4ZM9 9H16M8 13H16M8 16H16" stroke="#30343f" strokeWidth="1.6" fill="none" />
          </svg>
        </SmallButton>
        <SmallButton aria-label="拾取以进行编辑">
          <svg width="20" height="20" viewBox="0 0 20 20">
            <path d="M1 1H19V19H1Z" fill="#a3a3a6" />
            <path d="M2 10H10L8 7L15 12L8 18L10 14H2Z" fill="#c4c4c6" stroke="#7b7b7e" />
            <path d="M4 3H12M4 6H8" stroke="#c8c8ca" />
          </svg>
        </SmallButton>
        <SelectBox $w={254} $face="#fcfcfc" $quiet>
          <select aria-label="活动设计选项">
            <option>主模型</option>
          </select>
          <ChevronDown size={16} />
        </SelectBox>
        <SelectTools>
          {selectTools.map(([name, drawing]) => (
            <SmallButton key={name} aria-label={name}>
              <svg width="20" height="20" viewBox="0 0 20 20">
                {drawing}
              </svg>
            </SmallButton>
          ))}
        </SelectTools>
        <Count>:0</Count>
      </StatusBar>
    </Window>
  );
}

const plainButton = css`
  border: none;
  background: none;
  padding: 0;
  cursor: default;
`;

const Hidden = styled.svg`
  position: absolute;
  width: 0;
  height: 0;
`;

const Window = styled.div`
  display: flex;
  flex-direction: column;
  height: 100vh;
  padding: 0 0 3px 3px;
  border-top: 1px solid #000;
  border-right: 1px solid #000;
  background: #fcfcfc;
  overflow: hidden;
`;

const TabBar = styled.nav`
  display: flex;
  flex: none;
  height: 20px;
  background: #d4d4d4;
`;

const Tab = styled.button`
  ${plainButton}
  padding: 0 12px 5px;
  line-height: 15px;
  white-space: nowrap;
  color: #2b2b30;
  background: ${(p) => (p.$on ? "#eef5f8" : "transparent")};
`;

const FileTab = styled(Tab)`
  width: 34px;
  padding: 0 0 5px;
  color: #fcfcfc;
  margin-right: -2px;
`;

const Collapse = styled.button`
  ${plainButton}
  display: flex;
  align-items: center;
  gap: 6px;
  margin-left: 28px;
  padding-bottom: 4px;
`;

const CollapseFace = styled.span`
  display: grid;
  place-items: center;
  width: 19px;
  height: 12px;
  border: 1px solid #55585f;
  border-radius: 3px;
  background: #f2f2f2;
`;

const Caret = styled.span`
  display: inline-block;
  width: 0;
  height: 0;
  border: ${(p) => (p.$big ? 5 : 3)}px solid transparent;
  border-top: ${(p) => (p.$big ? 5 : 4)}px solid #2f2f35;
  border-bottom: none;
`;

const SideCaret = styled(Caret)`
  position: absolute;
  right: -10px;
  top: 20px;
`;

const RibbonBar = styled.div`
  display: flex;
  flex: none;
  height: 150px;
  background: #ecf4f7;
  overflow: hidden;
`;

const RibbonPanel = styled.section`
  flex: none;
  height: 119px;
  padding: ${(p) => (p.$first ? "5px 6px 0 7px" : "5px 2px 0 5px")};
  border-right: 1px solid #ecdfe2;
`;

const ToolRow = styled.div`
  display: flex;
  height: 88px;
`;

const Tool = styled.button`
  ${plainButton}
  display: flex;
  flex-direction: column;
  align-items: center;
  width: ${(p) => p.$w}px;
  padding-top: ${(p) => (p.$active ? 1 : 2)}px;
  color: #37373d;
  ${(p) =>
    p.$active &&
    css`
      border: 1px solid #1c74c4;
      background: linear-gradient(#a9cbea, #b9d8f2);
    `}
  &:disabled {
    color: #bcb9bc;
  }
`;

const ToolIcon = styled.svg`
  flex: none;
  width: 38px;
  height: 38px;
  margin-bottom: 6px;
`;

const ToolLabel = styled.span`
  position: relative;
  line-height: 20px;
  white-space: pre;
  text-align: center;
  & + ${Caret} {
    margin-top: 4px;
  }
`;

const PanelTitle = styled.div`
  display: flex;
  align-items: center;
  justify-content: center;
  gap: 8px;
  margin-top: 5px;
  line-height: 20px;
  white-space: nowrap;
  color: #37373d;
`;

const Workspace = styled.main`
  display: flex;
  flex: 1;
  min-height: 0;
  padding-bottom: 2px;
  gap: 4px;
  background: #ecf2f4;
`;

const Palette = styled.aside`
  display: flex;
  flex-direction: column;
  flex: none;
  width: ${(p) => p.$w}px;
`;

const PaletteTitle = styled.header`
  display: flex;
  flex: none;
  align-items: center;
  justify-content: space-between;
  height: 27px;
  margin-bottom: 2px;
  padding: 0 2px 0 3px;
  font-size: 14px;
  background: #bccbdb;
`;

const CloseButton = styled.button`
  ${plainButton}
  display: grid;
  place-items: center;
  width: 18px;
  height: 18px;
`;

const PropertiesBody = styled.div`
  display: flex;
  flex-direction: column;
  flex: 1;
  min-height: 0;
  margin-right: 2px;
  border-left: 1px solid #77777c;
  border-top: 1px solid #77777c;
  border-bottom: 1px solid #d8d8da;
  background: #eef0f2;
`;

const TypeSelector = styled.div`
  display: flex;
  flex: none;
  align-items: center;
  height: 91px;
  gap: 5px;
  padding: 0 2px 0 4px;
  border-bottom: 1px solid #c9c6c8;
  color: #3a3a40;
  ${Caret} {
    margin-left: auto;
  }
`;

const Thumb = styled.div`
  display: grid;
  place-items: center;
  width: 82px;
  height: 82px;
  border: 1px solid #cfcaca;
`;

const InstanceRow = styled.div`
  display: flex;
  flex: none;
  height: 30px;
  padding: 1px 0 2px;
  gap: 5px;
`;

const SelectBox = styled.div`
  position: relative;
  flex: ${(p) => (p.$grow ? "1" : "none")};
  width: ${(p) => (p.$w ? p.$w + "px" : "auto")};
  height: ${(p) => (p.$grow ? 27 : 22)}px;
  select {
    appearance: none;
    width: 100%;
    height: 100%;
    padding: 0 24px 0 3px;
    border: 1px solid ${(p) => (p.$quiet ? "#e4e4e4" : "#b3b3aa")};
    border-radius: 0;
    background: ${(p) => p.$face};
    color: ${(p) => (p.$quiet ? "#77777b" : "#101014")};
  }
  svg {
    position: absolute;
    right: 2px;
    top: calc(50% - 8px);
    color: ${(p) => (p.$quiet ? "#aaaaaa" : "#55555a")};
    pointer-events: none;
  }
`;

const EditType = styled.button`
  ${plainButton}
  display: flex;
  align-items: center;
  gap: 4px;
  padding-right: 8px;
  padding-bottom: 3px;
  line-height: 20px;
`;

const TableArea = styled.div`
  display: flex;
  flex: 1;
  min-height: 0;
`;

const TableClip = styled.div`
  flex: 1;
  overflow: hidden;
  background: #fcfcfc;
`;

const PropertyTable = styled.table`
  width: 100%;
  table-layout: fixed;
  border-spacing: 0;
`;

const GroupCell = styled.td`
  height: 24px;
  padding: 0;
  background: #d8d8d9;
`;

const GroupHead = styled.div`
  display: flex;
  justify-content: space-between;
  height: 24px;
  padding: 0 2px;
  line-height: 23px;
`;

const PropertyRow = styled.tr`
  color: ${(p) => (p.$off ? "#808084" : "#101014")};
  td {
    height: 24px;
    padding: 0;
    line-height: 20px;
    border-bottom: 1px dotted #808084;
    border-right: 1px dotted #808084;
    vertical-align: top;
    white-space: nowrap;
  }
  td:first-child {
    padding-left: 10px;
  }
  output {
    padding-left: 2px;
  }
`;

const ScaleInput = styled.input`
  display: block;
  width: 100%;
  height: 23px;
  padding: 0 5px 2px;
  border: 1px solid #000;
  background: #fff;
`;

const EditButton = styled.button`
  display: block;
  width: calc(100% - 1px);
  height: 22px;
  margin: 1px 0 0 1px;
  padding: 0;
  line-height: 18px;
  border: solid #a9a99f;
  border-width: 1px 2px 2px 1px;
  background: #e2e2e2;
`;

const Check = styled.input`
  appearance: none;
  display: block;
  width: 16px;
  height: 16px;
  margin: 3px;
  border: 1px solid #26262c;
  background: #fff;
  &:disabled {
    border-color: #c8c8ca;
  }
`;

const ScrollColumn = styled.div`
  display: flex;
  flex: none;
  flex-direction: column;
  align-items: center;
  width: 21px;
  color: #4a4a4e;
  svg {
    flex: none;
    margin: 2px 0;
  }
`;

const ScrollTrack = styled.div`
  flex: 1;
  align-self: stretch;
  padding: 0 2px 0 1px;
`;

const ScrollThumb = styled.div`
  height: 80%;
  background: #c9c9ca;
`;

const PaletteFooter = styled.footer`
  display: flex;
  flex: none;
  justify-content: space-between;
  height: 27px;
  padding: 1px 2px 2px;
  line-height: 20px;
  a {
    color: #1464c8;
  }
`;

const ApplyButton = styled.button`
  width: 98px;
  padding: 0;
  border: 1px solid #bdbdbd;
  background: #c9c9ca;
  color: #8a8a8d;
`;

const BrowserBody = styled.div`
  flex: 1;
  margin: 0 2px 0 1px;
  padding-top: 1px;
  border: 1px solid #d8d8da;
  border-left-color: #77777c;
  border-top-color: #77777c;
  background: #fcfcfc;
  overflow: hidden;
`;

const TreeRow = styled.div`
  display: flex;
  align-items: center;
  height: 22px;
`;

const Guide = styled.span`
  position: relative;
  flex: none;
  width: 26px;
  height: 22px;
  &::before {
    content: "";
    position: absolute;
    left: 10px;
    top: ${(p) => (p.$kind === "f" ? "11px" : "0")};
    bottom: ${(p) => (p.$kind === "e" || p.$kind === "z" ? "11px" : "0")};
    border-left: 1px dotted #a0a0a4;
    display: ${(p) => (p.$kind === "n" ? "none" : "block")};
  }
  &::after {
    content: "";
    position: absolute;
    left: 11px;
    right: -2px;
    top: 11px;
    border-top: 1px dotted #a0a0a4;
    display: ${(p) => ("ln".includes(p.$kind) ? "none" : "block")};
  }
`;

const Toggle = styled.button`
  ${plainButton}
  position: absolute;
  z-index: 1;
  left: 4px;
  top: 5px;
  width: 13px;
  height: 13px;
  border: 1px solid #8f8f93;
  background: #f6f6f6;
  svg {
    display: block;
  }
`;

const NodeName = styled.span`
  margin-left: 3px;
  padding: 0 3px;
  line-height: 22px;
  white-space: nowrap;
  background: ${(p) => (p.$selected ? "#e2e2e2" : "transparent")};
`;

const Viewport = styled.section`
  display: flex;
  flex: 1;
  flex-direction: column;
  min-width: 0;
  border-left: 2px solid #6c6c70;
  border-top: 2px solid #6c6c70;
`;

const Canvas = styled.div`
  position: relative;
  flex: 1;
  min-height: 0;
  background: #fcfcfc;
`;

const Scene = styled.svg`
  display: block;
  width: 100%;
  height: 100%;
`;

const Cube = styled.svg`
  position: absolute;
  right: 0;
  top: 82px;
  width: 108px;
  height: 115px;
`;

const ViewBar = styled.div`
  display: flex;
  flex: none;
  align-items: center;
  height: 20px;
  gap: 8px;
  padding-left: 27px;
`;

const ScaleLabel = styled.span`
  width: 71px;
  font-family: "Liberation Mono", monospace;
  font-size: 13px;
`;

const SmallButton = styled.button`
  ${plainButton}
  display: block;
  flex: none;
  svg {
    display: block;
  }
`;

const BottomTrack = styled.div`
  display: flex;
  flex: 1;
  justify-content: center;
  padding-left: 20px;
`;

const BottomThumb = styled.div`
  width: 21px;
  height: 19px;
  background: #c9c9ca;
`;

const StatusBar = styled.footer`
  display: flex;
  flex: none;
  align-items: center;
  height: 30px;
  gap: 8px;
  border-top: 1px solid #85858a;
  background: #d4d4d4;
`;

const Hint = styled.span`
  flex: 0 1 749px;
  min-width: 0;
  padding-left: 1px;
  line-height: 24px;
  overflow: hidden;
  white-space: nowrap;
`;

const Requests = styled.span`
  display: flex;
  align-items: center;
  width: 54px;
  gap: 6px;
`;

const SelectTools = styled.div`
  display: flex;
  gap: 10px;
  margin-left: auto;
`;

const Count = styled.span`
  width: 8px;
  margin-left: -8px;
  overflow: hidden;
`;
